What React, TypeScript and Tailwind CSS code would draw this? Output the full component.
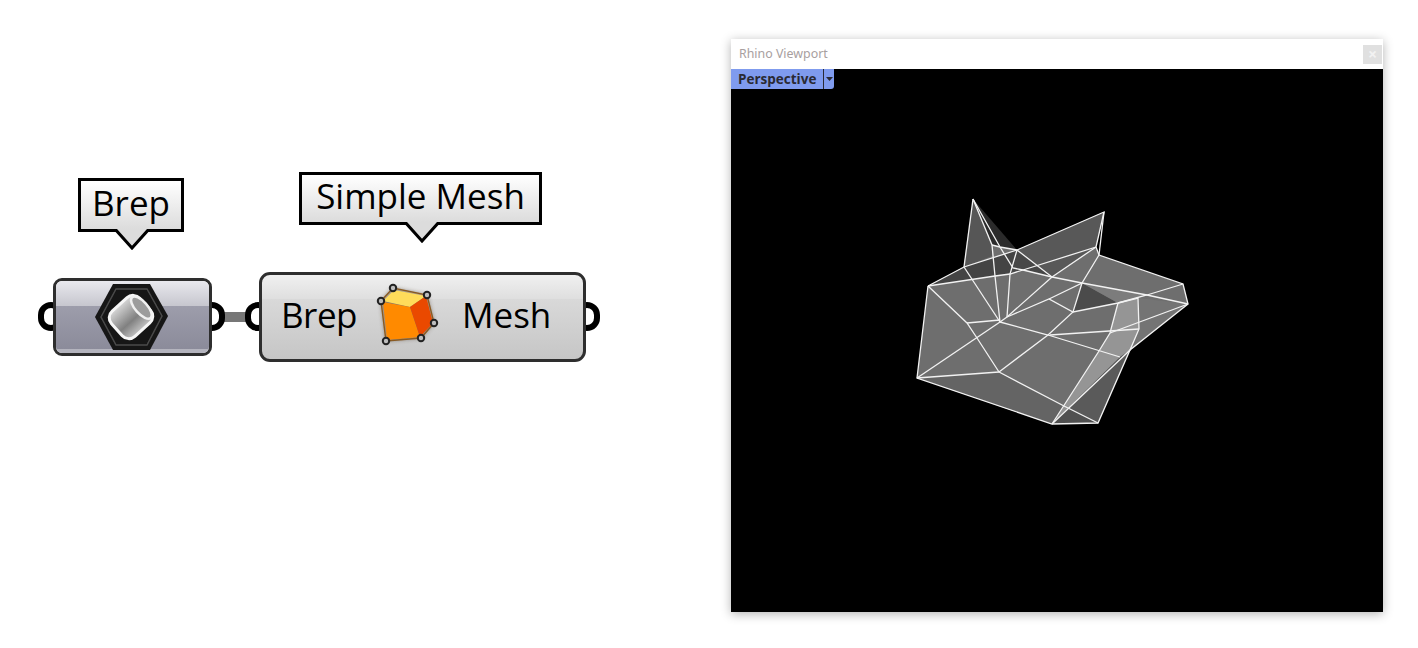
const font = "[font-family:'Open_Sans',sans-serif]";

function Tooltip({ label, className }: { label: string; className: string }) {
  return (
    <div className={`absolute flex items-center justify-center border-[3px] border-black bg-gradient-to-b from-white to-[#dcdcdc] text-black text-[35px] leading-none ${font} ${className}`}>
      <span className="-mt-[6px]">{label}</span>
      <svg className="absolute left-1/2 -bottom-[23px] -ml-[17px]" width="36" height="23" viewBox="0 0 36 23">
        <path d="M1 0 L18 19 L35 0" fill="#dcdcdc" stroke="#000" strokeWidth="3" />
      </svg>
    </div>
  );
}

function Grip({ className }: { className: string }) {
  return <div className={`absolute w-[26px] h-[29px] rounded-full border-[6px] border-black ${className}`} />;
}

function BrepIcon() {
  return (
    <svg width="95" height="75" viewBox="0 0 95 75">
      <defs>
        <linearGradient id="cyl" x1="0" y1="0" x2="0" y2="1">
          <stop offset="0" stopColor="#d8d8d8" />
          <stop offset="0.6" stopColor="#808080" />
          <stop offset="1" stopColor="#c4c4c4" />
        </linearGradient>
        <filter id="soft"><feGaussianBlur stdDeviation="0.7" /></filter>
      </defs>
      <g filter="url(#soft)">
        <path d="M10 37 L28 4 L65 4 L83 36 L65 70 L28 70 Z" fill="#161616" />
        <path d="M16 37 L31 9 L62 9 L77 36 L62 65 L31 65 Z" fill="none" stroke="#4a4a4a" strokeWidth="1.5" />
        <g transform="rotate(-42 46 37)">
          <rect x="27" y="20" width="38" height="34" rx="9" fill="url(#cyl)" stroke="#f6f6f6" strokeWidth="3" />
          <ellipse cx="60" cy="37" rx="6" ry="14" fill="#9c9c9c" stroke="#f0f0f0" strokeWidth="2.5" />
        </g>
      </g>
    </svg>
  );
}

function MeshIcon() {
  const pts = [[11, 21], [23, 8], [57, 15], [64, 43], [51, 58], [16, 61]];
  return (
    <svg width="75" height="70" viewBox="0 0 75 70">
      <defs>
        <filter id="soft2"><feGaussianBlur stdDeviation="0.7" /></filter>
        <filter id="soft3"><feGaussianBlur stdDeviation="2" /></filter>
      </defs>
      <path d="M11 21 L23 8 L57 15 L64 43 L51 58 L16 61 Z" fill="#4a3a2a" opacity="0.6" filter="url(#soft3)" />
      <g filter="url(#soft2)">
        <path d="M13 21 L24 10 L56 16 L40 27 Z" fill="#ffdc5a" />
        <path d="M13 22 L40 27 L50 57 L17 60 Z" fill="#ff8a00" />
        <path d="M40 27 L56 16 L63 43 L50 57 Z" fill="#ea4a04" />
        <path d="M11 21 L23 8 L57 15 L64 43 L51 58 L16 61 Z" fill="none" stroke="#8a5a20" strokeWidth="1.4" />
        {pts.map(([x, y]) => (
          <circle key={x} cx={x} cy={y} r="3.2" fill="#bdbdbd" stroke="#222" strokeWidth="2" />
        ))}
      </g>
    </svg>
  );
}

const faces: [string, string][] = [
  ["973,199 1017,250 992,245", "#2b2b2b"],
  ["928,286 964,267 973,199 992,245 1017,250 1104,212 1096,247 1099,255 1183,284 1188,304 1130,350 1098,423 1052,424 917,378", "#6e6e6e"],
  ["973,199 964,267 992,256 992,245", "#565656"],
  ["964,267 1017,250 1010,274 995,276 928,286", "#444444"],
  ["1017,250 1052,277 1023,270 1010,274", "#474747"],
  ["1017,250 1104,212 1096,247 1052,277", "#585858"],
  ["1082,283 1118,303 1073,312", "#4b4b4b"],
  ["1082,283 1147,295 1118,303", "#7c7c7c"],
  ["1052,424 1099,351 1110,333 1118,303 1138,298 1139,329 1130,350", "#959595"],
  ["1052,424 1130,350 1098,423", "#5a5a5a"],
  ["1120,357 1130,350 1068,408", "#4e4e4e"],
  ["1052,424 1068,408 1098,423", "#505050"],
  ["1138,298 1188,304 1130,350 1139,329", "#747474"],
  ["917,378 999,372 1064,406 1052,424", "#646464"],
];

const edges = [
  "928,286 964,267 1017,250 1104,212 1096,247 1099,255 1183,284 1188,304 1130,350 1098,423 1052,424 917,378 928,286",
  "1104,212 1099,255",
  "973,199 964,267",
  "973,199 1000,247 1013,268 1023,270 1052,277 1082,283 1147,295 1188,304",
  "973,199 992,245 995,276 1000,322",
  "992,245 1000,247 1017,250",
  "1017,250 1010,274 1007,317",
  "928,286 995,276 1010,274 1023,270 1096,247",
  "1017,250 1052,277 1096,247",
  "1052,277 1007,317 1000,322",
  "1007,317 1049,299 1073,312 1118,303 1147,295 1183,284",
  "1049,299 1082,283 1099,255",
  "1082,283 1073,312 1048,335 999,372",
  "1000,322 1048,335 1120,357",
  "1000,322 964,267",
  "928,286 967,323 977,338 999,372",
  "967,323 1000,320",
  "917,378 1000,322",
  "917,378 999,372",
  "999,372 1064,406 1098,423",
  "1050,335 1139,329",
  "1110,333 1188,304",
  "1118,303 1110,333 1099,351 1052,424",
  "1118,303 1138,298 1139,329 1130,350 1052,424",
];

export default function App() {
  return (
    <div className="flex h-[648px] w-[1418px] overflow-hidden bg-white">
      <section className="relative w-[731px] shrink-0">
        <Tooltip label="Brep" className="left-[78px] top-[178px] w-[106px] h-[54px]" />
        <Tooltip label="Simple Mesh" className="left-[299px] top-[172px] w-[243px] h-[53px]" />

        <div className="absolute left-[222px] top-[312px] w-[26px] h-[10px] bg-[#777]" />
        <Grip className="left-[38px] top-[302px]" />
        <Grip className="left-[199px] top-[302px]" />
        <Grip className="left-[245px] top-[302px]" />
        <Grip className="left-[574px] top-[302px]" />

        <div className="absolute left-[53px] top-[278px] w-[159px] h-[78px] rounded-[9px] border-[3px] border-[#2e2e2e] overflow-hidden flex flex-col">
          <div className="h-[25px] bg-gradient-to-b from-[#e9e9ee] to-[#c6c6ce]" />
          <div className="flex-1 bg-gradient-to-b from-[#9d9dab] to-[#8b8b9a]" />
          <div className="h-[4px] bg-[#b4b4be]" />
        </div>
        <div className="absolute left-[85px] top-[280px]"><BrepIcon /></div>

        <div className={`absolute left-[259px] top-[272px] w-[327px] h-[90px] rounded-[11px] border-[3px] border-[#2e2e2e] overflow-hidden bg-[linear-gradient(#f0f0f0,#dfdfdf_28%,#d9d9d9_28%,#c6c6c6)] flex items-center text-black text-[35px] ${font}`}>
          <span className="-mt-1 ml-[19px] w-[181px] tracking-[-0.5px]">Brep</span>
          <span className="-mt-1">Mesh</span>
        </div>
        <div className="absolute left-[370px] top-[280px]"><MeshIcon /></div>
      </section>

      <section className="mt-[39px] flex h-[573px] w-[652px] shrink-0 flex-col bg-black shadow-[0_2px_10px_rgba(0,0,0,0.3)]">
        <header className="flex h-[30px] shrink-0 items-center justify-between bg-white pl-2 pr-[1px]">
          <span className="text-[12.4px] text-[#a8a0a0] font-['Noto_Sans',sans-serif]">Rhino Viewport</span>
          <div className="flex h-[19px] w-[19px] items-center justify-center bg-[#e0e0e0] text-[16px] font-bold leading-none text-[#f2f2f2]">×</div>
        </header>
        <div className="relative flex-1">
          <div className="absolute left-0 top-0 flex h-[20px] w-[103px] items-center rounded-br-[3px] bg-[#7f9bee] pl-[7px] text-[13.5px] font-bold text-[#2a2a33] font-['Open_Sans',sans-serif]">
            <span className="mt-px w-[85px]">Perspective</span>
            <span className="h-full w-px bg-[#2a2a33]" />
            <svg className="ml-[2px]" width="7" height="4" viewBox="0 0 7 4"><path d="M0 0 H7 L3.5 4 Z" fill="#2a2a33" /></svg>
          </div>
          <svg className="absolute left-[169px] top-[110px]" width="300" height="260" viewBox="900 179 300 260">
            {faces.map(([points, fill]) => (
              <polygon key={points} points={points} fill={fill} />
            ))}
            {edges.map((points) => (
              <polyline key={points} points={points} fill="none" stroke="#f2f2f2" strokeWidth="1.3" />
            ))}
          </svg>
        </div>
      </section>
    </div>
  );
}
